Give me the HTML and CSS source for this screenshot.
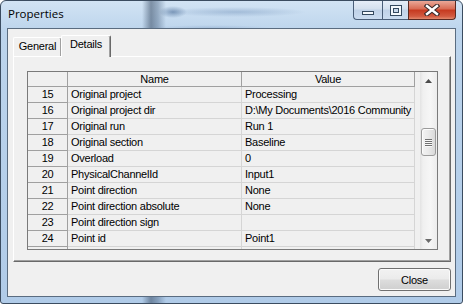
FILE: index.html
```html
<!DOCTYPE html>
<html lang="en">
<head>
<meta charset="UTF-8" />
<title>Properties</title>
<link rel="stylesheet" href="styles.css">
</head>
<body>

<div class="window">
  <div class="titlebar">
    <span class="title">Properties</span>
    <div class="caption">
      <span class="cap cap-min">
        <svg width="12" height="4" viewBox="0 0 12 4"><rect x="0.5" y="0.5" width="11" height="3" fill="#f4f8fc" stroke="#34495f"/></svg>
      </span>
      <span class="cap cap-max">
        <svg width="12" height="11" viewBox="0 0 12 11"><rect x="0.5" y="0.5" width="11" height="10" fill="#f4f8fc" stroke="#34495f"/><rect x="3.5" y="3.5" width="5" height="4" fill="#c9d8ea" stroke="#34495f"/></svg>
      </span>
      <span class="cap cap-close">
        <svg width="16" height="12" viewBox="0 0 16 12"><path d="M3 2 L13 10 M13 2 L3 10" stroke="#3a2a2a" stroke-width="4.6" stroke-linecap="square"/><path d="M3 2 L13 10 M13 2 L3 10" stroke="#fff" stroke-width="2.4" stroke-linecap="square"/></svg>
      </span>
    </div>
  </div>

  <div class="client">
    <div class="tabs">
      <span class="tab">General</span>
      <span class="tab active">Details</span>
    </div>

    <div class="panel">
      <div class="grid-wrap">
        <div class="table" id="table">
          <div class="row head">
            <span class="num"></span>
            <span class="name">Name</span>
            <span class="val">Value</span>
          </div>
        </div>
        <div class="scrollbar">
          <span class="arrow"><svg width="7" height="4" viewBox="0 0 7 4"><polygon points="3.5,0 7,4 0,4" fill="#4a4a4a"/></svg></span>
          <span class="track"><span class="thumb"><i></i><i></i><i></i><i></i></span></span>
          <span class="arrow"><svg width="7" height="4" viewBox="0 0 7 4"><polygon points="0,0 7,0 3.5,4" fill="#6a6a6a"/></svg></span>
        </div>
      </div>
    </div>

    <div class="footer">
      <button class="btn">Close</button>
    </div>
  </div>
</div>

<script>
  // rows of the details list
  const props = [
    [15, "Original project", "Processing"],
    [16, "Original project dir", "D:\\My Documents\\2016 Community"],
    [17, "Original run", "Run 1"],
    [18, "Original section", "Baseline"],
    [19, "Overload", "0"],
    [20, "PhysicalChannelId", "Input1"],
    [21, "Point direction", "None"],
    [22, "Point direction absolute", "None"],
    [23, "Point direction sign", ""],
    [24, "Point id", "Point1"],
    ["", "", ""]
  ];

  const table = document.getElementById("table");
  props.forEach(p => {
    const row = document.createElement("div");
    row.className = "row";
    ["num", "name", "val"].forEach((cls, i) => {
      const span = document.createElement("span");
      span.className = cls;
      span.textContent = p[i];
      row.appendChild(span);
    });
    table.appendChild(row);
  });
</script>

</body>
</html>
```

FILE: styles.css
```css
body {
  margin: 0;
  background: #fff;
  font-family: "Liberation Sans", Arial, sans-serif;
}
.window {
  width: 463px;
  height: 304px;
  box-sizing: border-box;
  border: 1px solid #3b4c60;
  border-radius: 6px 6px 3px 3px;
  padding: 0 6px 6px;
  display: flex;
  flex-direction: column;
  background:
    radial-gradient(ellipse 14px 6px at 172px 11px, rgba(60, 95, 140, 0.55), transparent),
    radial-gradient(ellipse 70px 5px at 235px 11px, rgba(90, 125, 170, 0.35), transparent),
    radial-gradient(ellipse 60px 3px at 210px 27px, rgba(90, 125, 170, 0.25), transparent),
    linear-gradient(to right, transparent 141px, rgba(55, 75, 100, 0.55) 150px, rgba(70, 95, 125, 0.4) 157px, transparent 165px),
    linear-gradient(to bottom, #d2e3f4, #bcd4ec 30px, #b0cbe8);
}
.titlebar {
  height: 27px;
  display: flex;
  align-items: flex-start;
}
.title {
  font-family: "Open Sans", "Noto Sans", sans-serif;
  font-size: 11.5px;
  line-height: 16px;
  padding: 5px 0 0 1px;
  color: #000;
}
.caption {
  display: flex;
  margin-left: auto;
  height: 19px;
}
.cap {
  box-sizing: border-box;
  height: 19px;
  display: flex;
  align-items: center;
  justify-content: center;
  border: 1px solid #4a5e78;
  border-top: none;
  background: linear-gradient(to bottom, #e6eef8, #d4e0ee 45%, #c0d2e8 50%, #cbdcf0);
}
.cap-min {
  width: 29px;
  border-radius: 0 0 0 4px;
  border-right: none;
  align-items: flex-end;
  padding-bottom: 4px;
}
.cap-max {
  width: 26px;
  border-right: none;
}
.cap-close {
  width: 48px;
  border-radius: 0 0 4px 0;
  border-color: #5a2a22;
  background: linear-gradient(to bottom, #eaa898, #d86a52 45%, #c6391f 50%, #d25a40 85%, #e38a6e);
}
.client {
  flex: 1;
  display: flex;
  flex-direction: column;
  background: #f0f0f0;
  border: 1px solid #5a6c80;
  font-size: 11px;
  letter-spacing: -0.25px;
  color: #000;
}
.tabs {
  height: 27px;
  display: flex;
  align-items: flex-end;
  padding-left: 5px;
}
.tab {
  box-sizing: border-box;
  height: 19px;
  width: 49px;
  padding-top: 2px;
  line-height: 13px;
  text-align: center;
  border: 1px solid #fff;
  border-right-color: #696969;
  border-bottom: none;
  border-radius: 2px 2px 0 0;
  box-shadow: inset -1px 0 #a0a0a0;
  background: #f0f0f0;
}
.tab.active {
  height: 22px;
  width: 50px;
  margin-left: -1px;
  margin-bottom: -1px;
  position: relative;
  z-index: 1;
}
.panel {
  height: 206px;
  box-sizing: border-box;
  margin: 0 4px 0 5px;
  border: 1px solid #fff;
  border-right-color: #696969;
  border-bottom-color: #696969;
  box-shadow: inset -1px -1px #a0a0a0;
  padding: 14px 12px 11px 13px;
}
.grid-wrap {
  height: 179px;
  box-sizing: border-box;
  border: 1px solid #7a7a7a;
  display: flex;
}
.table {
  width: 392px;
  overflow: hidden;
}
.row {
  display: flex;
  height: 16px;
  line-height: 15px;
}
.row span {
  box-sizing: border-box;
  height: 16px;
  white-space: nowrap;
  overflow: hidden;
  border-right: 1px solid #d5d5d5;
  border-bottom: 1px solid #d5d5d5;
}
.row .num {
  width: 40px;
  text-align: center;
  border-color: #a0a0a0;
}
.row .name {
  width: 174px;
  padding-left: 3px;
}
.row .val {
  width: 173px;
  padding-left: 3px;
}
.row.head {
  height: 15px;
  line-height: 14px;
}
.row.head span {
  height: 15px;
  text-align: center;
  padding-left: 0;
  border-color: #a0a0a0;
}
.scrollbar {
  width: 17px;
  display: flex;
  flex-direction: column;
  background: linear-gradient(to right, #e3e3e3, #f0f0f0 3px, #f6f6f6 60%, #ececec);
}
.arrow {
  height: 17px;
  display: flex;
  align-items: center;
  justify-content: center;
}
.track {
  flex: 1;
  padding-top: 39px;
}
.thumb {
  box-sizing: border-box;
  display: flex;
  flex-direction: column;
  align-items: center;
  justify-content: center;
  gap: 1px;
  height: 28px;
  margin: 0 1px;
  border: 1px solid #9b9b9b;
  border-radius: 3px;
  background: linear-gradient(to right, #f4f4f4, #e9e9e9 50%, #d9d9d9);
  box-shadow: inset 1px 1px #fcfcfc;
}
.thumb i {
  display: block;
  width: 7px;
  height: 1px;
  background: #707070;
  box-shadow: 0 1px #f8f8f8;
}
.footer {
  display: flex;
  justify-content: flex-end;
  padding: 6px 4px 0 0;
}
.btn {
  width: 73px;
  height: 23px;
  padding: 0;
  border: 1px solid #707070;
  border-radius: 3px;
  background: linear-gradient(to bottom, #f2f2f2, #ebebeb 48%, #dddddd 52%, #cfcfcf);
  box-shadow: inset 0 0 0 1px #fbfbfb;
  font-family: "Liberation Sans", Arial, sans-serif;
  font-size: 11px;
  letter-spacing: -0.25px;
  color: #000;
}
```
